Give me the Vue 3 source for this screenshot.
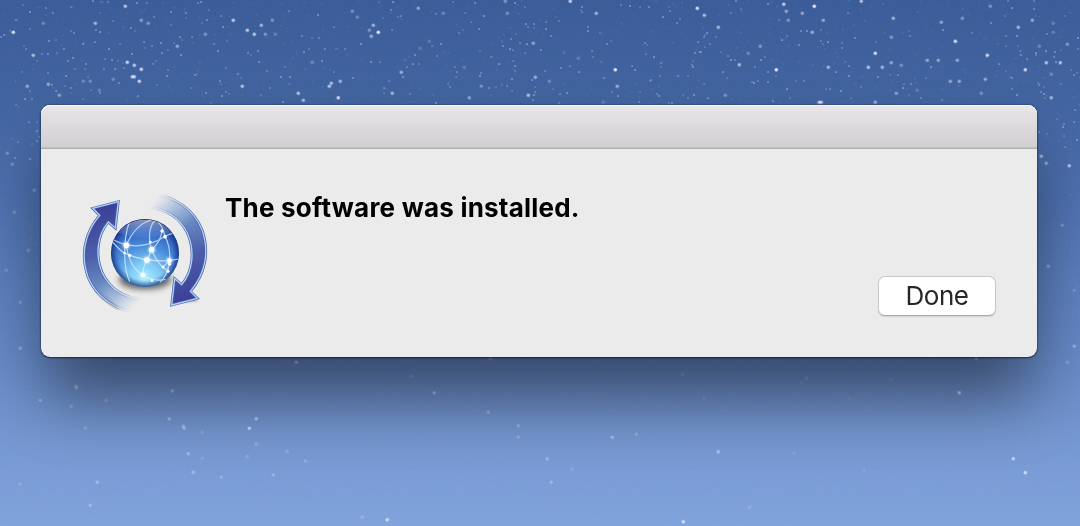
<script setup>
// Star field: [x, y, brightness]
const brightStars = [
  [125,6,.7],[141,20,.45],[148,23,.4],[95,23,.6],[13,32,.9],[233,20,.75],[247,30,.75],[254,34,.75],[261,25,.6],[272,20,.4],[265,34,.4],[275,34,.25],[205,34,.4],[177,46,.5],[33,55,.65],[127,62,.8],[134,65,.75],[141,69,.85],[132,76.5,.8],[134,76.5,.8],[139,81,.85],[48,84,.5],[27,86,.5],[59,95,.45],[242,86,.7],[298,93,.7],[303,100,.65],[329,86,.7],[331,83,.65],[340,81,.6],[338,97.5,.9],[352,11,.35],[357,17,.3],[83,81,.3],[90,81,.3],[113,79,.3],[312,62,.3],[43,23,.3],[99,90,.25],[7,153,.3],[12,164,.3],
  [418,8,.5],[443,13,.3],[505,1,.4],[570,1,.8],[507,13,.35],[596,13,.6],[697,8,.9],[704,15,.65],[718,27,.6],[373,25,.6],[378,32,1],[369,30,.4],[371,36,.55],[533,43,.5],[401,72,.55],[535,77,.55],[615,69.5,1],[528,95,.7],[392,93,.6],[469,97.5,.5],[481,86,.35],[617,86,.55],[549,81,.3],[420,48,.2],[429,41,.2],[464,67,.2],[578,58,.2],[603,102,.2],
  [783.5,4,.8],[786,11,.5],[788,20,.4],[802,13,.5],[814,6,1],[823,20,.5],[861,1,.7],[893,18,.6],[990,6,.4],[941,22,.5],[962,18,.4],[1018,27,.6],[1032,20,.5],[812,32,.55],[891,37,.4],[760,46,.4],[739,64.5,.65],[748,53,.3],[776,69.5,1],[875,53,.9],[828,67,.6],[868,67,.7],[882,67,.6],[891,62.5,.5],[901,65,.35],[955,41,.9],[987,55,.85],[927,60,.5],[938,60,.5],[957,60,.5],[1025,69.5,.85],[1046,62.5,.7],[1060,62.5,.7],[1067,44,.4],[1039,46,.3],[950,81,.5],[959,81,.5],[985,79,.5],[981,93,.35],[896,93,.45],[819,102,.75],[821,102,.75],[875,102,.55],[725,95,.35],[1051,97.5,.6],[1051,74,.3],[1041,156,.6],[1046,163,.5],[1069,165.5,.7],[917,90,.2],[1053,23,.25],[1053,32,.25],
  [20,348,.35],[76,386,.35],[76,388,.3],[172,390.5,.45],[169,418.5,.45],[183,426,.4],[184,428,.4],[256,418.5,.6],[249,428,.75],[256,444,.25],[188,453.5,.4],[193,472,.35],[221,477,.25],[273,474.5,.3],[247,456,.2],[287,451,.25],[305,461,.25],[97,482,.4],[90,505,.35],[20,484,.18],[85,428,.2],[71,406,.25],[40,400,.3],[106,400,.25],[296,362,.55],[202,432,.2],[202,458,.15],
  [411,376,.2],[434,392.5,.45],[488,412,.3],[518,425.5,.3],[518,437,.25],[547,458.5,.35],[551,482,.3],[612,437,.45],[636,434,.25],[718,451.5,.55],[682,374,.2],[704,398,.15],[387,519.5,.8],[362,517,.25],[683,521.5,.85],[490,358,.4],[572,469,.15],
  [959,392.5,.7],[976,358,.5],[1013,458.5,.7],[1025,472.5,.85],[806,378,.15],[801,383,.12],[864,470,.12],[749,507,.2],[794,453,.12],[849,398,.12],[1074,346,.4],[1067,362,.25],[1048,266,.35],[891,379,.12],
  [14,212,.25],[28,250,.25],[20,302,.25],[34,190,.3],[6,270,.2],[1062,225,.25],[1074,290,.2]
]

const smallStars = [
  [23,5],[46,8],[30,12],[71,7],[93,1],[102,2],[108,2],[137,3],[147,3],[53,13],[100,13],[154,17],[171,12],[171,25],[186,13],[186,18],[198,3],[201,2],[209,10],[207,20],[202,23],[221,16],[223,27],[113,21],[131,28],[135,31],[96,30],[100,32],[71,31],[74,33],[10,31],[1,37],[4,35],[30,29],[16,20],[24,46],[26,49],[49,41],[56,40],[83,44],[84,43],[95,42],[109,49],[120,44],[144,42],[145,48],[152,46],[161,43],[174,43],[180,37],[182,40],[192,37],[181,55],[168,50],[162,53],[156,61],[153,64],[132,54],[105,59],[112,60],[118,61],[42,54],[48,54],[57,53],[64,49],[37,61],[68,61],[73,58],[75,69],[86,64],[85,69],[104,69],[115,69],[124,68],[119,83],[22,72],[48,73],[66,76],[88,77],[52,85],[65,86],[71,88],[56,91],[91,90],[100,93],[83,99],[32,99],[25,99],[30,91],[138,96],[157,85],[168,70],[167,76],[191,88],[195,75],[197,74],[214,44],[218,51],[227,41],[248,53],[251,55],[258,51],[259,62],[226,68],[220,81],[221,84],[226,92],[222,96],[229,94],[238,74],[241,78],[267,71],[281,77],[285,67],[290,77],[289,84],[270,88],[283,102],[261,95],[206,93],[211,103],[289,11],[318,15],[334,27],[302,36],[312,38],[319,38],[304,52],[309,49],[325,49],[336,49],[345,49],[322,61],[334,72],[353,78],[37,122],[29,122],[37,131],[39,137],[37,141],[32,144],[18,142],[30,159],[16,105],[15,158],
  [379,2],[391,10],[393,2],[398,17],[401,16],[383,18],[392,30],[361,44],[380,62],[371,62],[405,60],[407,67],[413,64],[419,64],[415,55],[432,46],[437,56],[441,44],[455,67],[457,72],[448,84],[450,87],[403,77],[389,81],[384,88],[384,93],[410,94],[436,103],[453,2],[475,3],[465,13],[436,14],[484,16],[471,22],[479,29],[463,30],[459,33],[515,3],[525,7],[582,7],[581,10],[582,12],[526,24],[528,27],[534,24],[534,28],[546,22],[546,29],[559,21],[551,36],[516,34],[511,39],[510,49],[513,50],[503,46],[502,41],[520,43],[527,44],[525,53],[541,50],[480,51],[491,57],[499,64],[513,61],[515,66],[515,71],[481,73],[480,76],[456,77],[489,88],[502,85],[507,86],[512,79],[512,91],[532,80],[535,87],[535,92],[534,95],[545,71],[561,68],[564,53],[570,66],[579,72],[593,57],[592,51],[601,62],[588,27],[588,31],[600,33],[607,44],[611,41],[621,5],[630,6],[640,7],[649,7],[669,7],[670,11],[663,17],[680,19],[677,23],[705,35],[704,37],[707,33],[716,37],[698,42],[705,47],[710,44],[700,52],[701,52],[695,53],[693,61],[692,65],[693,67],[688,76],[678,76],[661,67],[661,63],[654,57],[646,54],[645,43],[647,45],[632,66],[635,70],[660,76],[651,80],[650,81],[657,94],[659,96],[669,103],[672,103],[683,95],[688,98],[694,95],[704,84],[708,98],[640,92],[639,102],[618,96],[612,92],[604,78],[553,89],[560,94],[567,93],[559,103],[533,100],[496,87],
  [731,13],[768,4],[779,20],[736,1],[741,9],[848,13],[807,31],[821,30],[801,31],[823,44],[821,41],[828,42],[842,43],[855,38],[876,42],[842,48],[782,40],[787,36],[799,45],[721,52],[728,56],[731,60],[735,60],[723,72],[727,78],[755,67],[761,60],[765,57],[768,72],[776,76],[752,82],[754,83],[758,81],[768,82],[796,81],[804,81],[787,89],[790,98],[773,101],[826,89],[830,89],[841,91],[851,98],[836,72],[845,62],[849,66],[849,76],[861,87],[878,77],[890,75],[898,75],[903,88],[904,84],[911,84],[909,95],[921,98],[931,67],[926,78],[942,100],[909,31],[910,36],[943,30],[972,33],[991,23],[1005,16],[1008,1],[1012,8],[1034,1],[1034,9],[1065,16],[1047,34],[1046,51],[1020,51],[1021,55],[1018,46],[1006,36],[1017,36],[1006,46],[999,64],[1006,71],[1027,59],[1036,53],[1036,55],[1055,52],[1061,50],[1054,57],[1056,62],[1071,70],[1074,75],[1077,73],[1078,49],[1078,38],[1038,83],[1039,85],[1044,87],[1041,92],[1044,94],[1045,98],[1012,78],[1010,77],[1012,89],[1017,95],[1061,84],[1075,110],[1057,119],[1064,124],[1063,127],[1064,136],[1074,122],[1047,134],[1039,132],[1077,140],[1065,147]
]

// Very faint dust, thinning out toward the horizon
let seed = 4711
const rand = () => {
  seed = (seed * 16807) % 2147483647
  return seed / 2147483647
}
const dust = Array.from({ length: 1100 }, () => {
  const y = Math.floor(Math.pow(rand(), 1.4) * 450)
  return [Math.floor(rand() * 1080), y, (0.05 + rand() * 0.13) * (y > 300 ? 0.6 : 1)]
})
</script>

<template>
  <main class="desktop">
    <svg class="sky" width="1080" height="526" viewBox="0 0 1080 526" aria-hidden="true">
      <defs>
        <filter id="grain" x="0" y="0" width="100%" height="100%">
          <feTurbulence type="fractalNoise" baseFrequency=".55" numOctaves="2" seed="3" />
          <feColorMatrix type="saturate" values="0" />
        </filter>
      </defs>
      <rect class="grain" width="1080" height="526" filter="url(#grain)" />
      <rect v-for="(s, i) in dust" :key="'d' + i" :x="s[0]" :y="s[1]" width="1.6" height="1.6" fill="#a9c2f5" :opacity="s[2]" />
      <rect v-for="(s, i) in smallStars" :key="'s' + i" :x="s[0] - .8" :y="s[1] - .8" width="1.7" height="1.7" fill="#aebff0" :opacity=".3 + (i * 7 % 5) * .08" />
      <g v-for="(s, i) in brightStars" :key="'b' + i" fill="#e9e8ff" :opacity="s[2]">
        <circle :cx="s[0] + .3" :cy="s[1] + .3" r="2.1" opacity=".5" />
        <circle :cx="s[0] + .3" :cy="s[1] + .3" r="1.3" />
      </g>
    </svg>

    <section class="window">
      <header class="titlebar"></header>
      <div class="content">
        <svg class="icon" width="150" height="140" viewBox="0 0 450 420" aria-hidden="true">
          <defs>
            <linearGradient id="arrowFill" gradientUnits="userSpaceOnUse" x1="85" y1="70" x2="185" y2="385">
              <stop offset="0" stop-color="#3b4096" />
              <stop offset=".4" stop-color="#4c5faa" />
              <stop offset=".7" stop-color="#6c8ec4" />
              <stop offset="1" stop-color="#a9c6eb" />
            </linearGradient>
            <linearGradient id="fade" gradientUnits="userSpaceOnUse" x1="100" y1="285" x2="195" y2="365">
              <stop offset="0" stop-color="#fff" />
              <stop offset=".5" stop-color="#aaa" />
              <stop offset="1" stop-color="#000" />
            </linearGradient>
            <mask id="tail" maskUnits="userSpaceOnUse" x="0" y="0" width="450" height="420">
              <rect width="450" height="420" fill="url(#fade)" />
            </mask>
            <radialGradient id="ball" cx=".5" cy=".88" r=".93">
              <stop offset="0" stop-color="#a8efff" />
              <stop offset=".25" stop-color="#80caf5" />
              <stop offset=".52" stop-color="#4a8cdb" />
              <stop offset=".78" stop-color="#2f5fbc" />
              <stop offset="1" stop-color="#152569" />
            </radialGradient>
            <radialGradient id="rim">
              <stop offset=".8" stop-color="#183b94" stop-opacity="0" />
              <stop offset="1" stop-color="#12276f" stop-opacity=".75" />
            </radialGradient>
            <linearGradient id="gloss" x1="0" y1="0" x2="0" y2="1">
              <stop offset="0" stop-color="#fff" stop-opacity=".5" />
              <stop offset="1" stop-color="#9fc0ff" stop-opacity=".08" />
            </linearGradient>
            <filter id="soft" x="-40%" y="-60%" width="180%" height="220%"><feGaussianBlur stdDeviation="9" /></filter>
            <filter id="glow" x="-20%" y="-20%" width="140%" height="140%"><feGaussianBlur stdDeviation="2.5" /></filter>
            <clipPath id="disc"><circle cx="225" cy="204" r="101" /></clipPath>
            <path id="arrow" d="M145 50 L136 129 L115 111 C80 153 75 214 98 266 C121 313 162 338 218 344 L218 385 C135 380 78 335 54 276 C30 208 45 142 89 91 L68 70 Z" />
          </defs>

          <ellipse cx="225" cy="284" rx="78" ry="29" fill="#000" opacity=".6" filter="url(#soft)" />
          <path d="M311 354 L384 348 L369 332 Z M62 285 Q92 350 150 375" fill="#222" opacity=".4" filter="url(#glow)" />

          <g mask="url(#tail)">
            <use href="#arrow" fill="url(#arrowFill)" stroke="#4d5ba3" stroke-width="8" />
            <use href="#arrow" fill="none" stroke="#a9d3f7" stroke-width="4" />
          </g>
          <g transform="rotate(180 225 205)">
            <g mask="url(#tail)">
              <use href="#arrow" fill="url(#arrowFill)" stroke="#4d5ba3" stroke-width="8" />
              <use href="#arrow" fill="none" stroke="#a9d3f7" stroke-width="4" />
            </g>
          </g>

          <circle cx="225" cy="204" r="102" fill="url(#ball)" />
          <circle cx="225" cy="204" r="102" fill="url(#rim)" />
          <g clip-path="url(#disc)">
            <g fill="none" stroke="#d9edff" stroke-width="3.6" opacity=".78">
              <path d="M178 112 C160 160 158 245 179 290" />
              <path d="M169 181 C185 143 210 115 243 105" />
              <path d="M127 163 Q205 206 286 154 Q308 143 314 146" />
              <path d="M128 171 Q148 195 164 205 L179 211 Q230 230 298 227 L326 222" />
              <path d="M169 181 C175 225 190 255 219 270 Q246 291 290 283" />
              <path d="M258 104 Q278 121 285 154 Q303 190 298 227 Q296 265 270 293" />
              <path d="M255 106 C235 125 235 170 245 194 Q260 232 279 246 L294 259" />
              <path d="M245 194 L231 225 Q218 248 219 270" />
              <path d="M276 138 Q272 170 245 194" />
              <path d="M279 246 L298 227 L293 259" />
            </g>
            <path d="M145 144 Q170 104 225 104 Q280 104 305 144 Q225 172 145 144 Z" fill="url(#gloss)" />
          </g>
          <g fill="#e4f6ff" opacity=".7" filter="url(#glow)">
            <circle cx="169" cy="181" r="11" /><circle cx="245" cy="194" r="11" /><circle cx="231" cy="225" r="11" />
            <circle cx="298" cy="227" r="10" /><circle cx="219" cy="270" r="10" />
          </g>
          <g fill="#fff">
            <circle cx="169" cy="181" r="8.5" /><circle cx="245" cy="194" r="8" /><circle cx="231" cy="225" r="8.5" />
            <circle cx="219" cy="270" r="7" /><circle cx="298" cy="227" r="7" /><circle cx="285" cy="155" r="5.5" />
            <circle cx="276" cy="138" r="5" /><circle cx="179" cy="211" r="5" /><circle cx="164" cy="204" r="4" />
            <circle cx="279" cy="246" r="4.5" /><circle cx="294" cy="259" r="4.5" /><circle cx="246" cy="287" r="4" />
            <circle cx="241" cy="171" r="4" /><circle cx="299" cy="238" r="4" />
          </g>
        </svg>
        <div class="body">
          <h1 class="message">The software was installed.</h1>
          <button class="done" type="button">Done</button>
        </div>
      </div>
    </section>
  </main>
</template>

<style>
html, body { margin: 0; overflow: hidden; }
</style>

<style scoped>
.desktop {
  position: relative;
  box-sizing: border-box;
  width: 1080px;
  height: 526px;
  padding: 105px 43px 0 41px;
  overflow: hidden;
  background: linear-gradient(#3a5b97 0, #41639f 100px, #4b6dad 180px, #6487c6 350px, #7496d1 440px, #7fa2dc 526px);
  font-family: Inter, "Liberation Sans", sans-serif;
}
.sky { position: absolute; inset: 0; }
.grain { opacity: .06; mix-blend-mode: overlay; }
.window {
  position: relative;
  box-sizing: border-box;
  width: 996px;
  height: 252px;
  border-radius: 9px;
  background: #ebebeb;
  box-shadow: 0 0 2px rgba(10, 20, 50, .65), 0 1px 2px rgba(10, 15, 35, .6), 0 44px 66px -4px rgba(0, 0, 0, .48);
}
.titlebar {
  box-sizing: border-box;
  height: 44px;
  border-bottom: 1px solid #afadaf;
  border-radius: 9px 9px 0 0;
  background: linear-gradient(#e8e6e8, #d0ced0);
  box-shadow: inset 0 1px #f9f9fa, inset 0 -1px #c4c2c4;
}
.content { display: flex; padding: 36px 41px 0 29px; }
.icon { flex: none; }
.body { flex: 1; display: flex; flex-direction: column; padding-left: 5px; }
.message {
  margin: 7px 0 0;
  font-size: 26px;
  line-height: 32px;
  font-weight: 700;
  letter-spacing: .22px;
  color: #000;
  white-space: nowrap;
}
.done {
  align-self: flex-end;
  box-sizing: border-box;
  width: 118px;
  height: 40px;
  margin: 52px 0 0;
  padding: 0;
  border: 1px solid #c8c8c8;
  border-bottom-color: #adadad;
  border-radius: 7px;
  background: #fff;
  box-shadow: 0 1px 1px rgba(0, 0, 0, .12);
  font: 400 26px/36px Inter, "Liberation Sans", sans-serif;
  letter-spacing: -.5px;
  color: #262626;
}
</style>
